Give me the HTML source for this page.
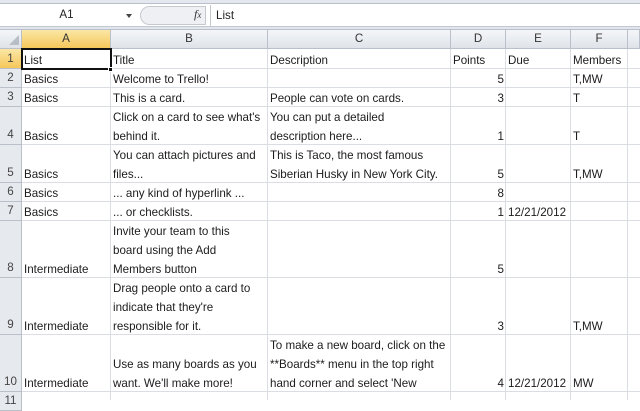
<!DOCTYPE html>
<html><head><style>
body{margin:0;width:640px;height:400px;overflow:hidden;background:#fff;font-family:"Liberation Sans",sans-serif;position:relative;font-size:11.6px;color:#1c1c1c}
div{position:absolute;box-sizing:border-box}
.top{left:0;top:0;width:640px;height:4px;background:#e4e8ee;border-bottom:1px solid #b8c0ca}
.sep{left:0;top:26px;width:640px;height:4px;background:#e2e6ec;border-top:1px solid #c2c8d0;border-bottom:1px solid #b8c0ca}
.v{top:49px;height:351px;width:1px;background:#dadde2}
.hl{left:22px;width:618px;height:1px;background:#dadde2}
.hd{top:30px;height:19px;background:linear-gradient(#f4f6f9,#dfe3e9);border-right:1px solid #b9c0c9;border-bottom:1px solid #b9c0c9;text-align:center;line-height:18px;color:#333}
.rh{left:0;width:22px;background:#e6e9ee;border-right:1px solid #b9c0c9;border-bottom:1px solid #b9c0c9;text-align:center;color:#444;line-height:19px;display:flex;align-items:flex-end;justify-content:center;padding-bottom:0}
.t{line-height:19px;white-space:nowrap;margin-top:2px}
.n{text-align:right}
</style></head><body>
<div class="top"></div>
<div style="left:0;top:5px;width:133px;height:20px;text-align:center;line-height:20px;color:#222">A1</div>
<div style="left:126px;top:14px;width:0;height:0;border-left:3px solid transparent;border-right:3px solid transparent;border-top:4px solid #444"></div>
<div style="left:140px;top:6px;width:66px;height:19px;border:1px solid #c4c9d0;border-radius:10px 0 0 10px;background:#eef0f3"></div>
<div style="left:194px;top:7px;font-style:italic;font-family:'Liberation Serif',serif;font-size:12px;color:#333">f<span style="font-size:9px">x</span></div>
<div style="left:210px;top:5px;width:1px;height:21px;background:#c4c9d0"></div>
<div style="left:216px;top:5px;line-height:21px;color:#222">List</div>
<div class="sep"></div>

<div class="hd" style="left:0;width:22px;padding:0"><svg width="10" height="10" style="position:absolute;left:9px;top:5px"><path d="M10 0V10H0Z" fill="#b8bec6"/></svg></div>
<div class="hd" style="left:22px;width:89px;background:linear-gradient(#fbe7a6,#f5c75a)">A</div>
<div class="hd" style="left:111px;width:157px">B</div>
<div class="hd" style="left:268px;width:183px">C</div>
<div class="hd" style="left:451px;width:55px">D</div>
<div class="hd" style="left:506px;width:65px">E</div>
<div class="hd" style="left:571px;width:57px">F</div>
<div class="hd" style="left:628px;width:12px"></div>

<div class="v" style="left:110px"></div><div class="v" style="left:267px"></div><div class="v" style="left:450px"></div>
<div class="v" style="left:505px"></div><div class="v" style="left:570px"></div><div class="v" style="left:627px"></div>
<div class="hl" style="top:68px"></div><div class="hl" style="top:87px"></div><div class="hl" style="top:106px"></div>
<div class="hl" style="top:144px"></div><div class="hl" style="top:182px"></div><div class="hl" style="top:201px"></div>
<div class="hl" style="top:220px"></div><div class="hl" style="top:277px"></div><div class="hl" style="top:334px"></div>
<div class="hl" style="top:391px"></div>

<div class="rh" style="top:49px;height:20px;background:linear-gradient(#fbe7a6,#f5c75a)">1</div>
<div class="rh" style="top:69px;height:19px">2</div>
<div class="rh" style="top:88px;height:19px">3</div>
<div class="rh" style="top:107px;height:38px">4</div>
<div class="rh" style="top:145px;height:38px">5</div>
<div class="rh" style="top:183px;height:19px">6</div>
<div class="rh" style="top:202px;height:19px">7</div>
<div class="rh" style="top:221px;height:57px">8</div>
<div class="rh" style="top:278px;height:57px">9</div>
<div class="rh" style="top:335px;height:57px">10</div>
<div class="rh" style="top:392px;height:19px">11</div>

<div style="left:21px;top:48px;width:91px;height:22px;border:2px solid #111"></div>
<div style="left:108px;top:67px;width:5px;height:5px;background:#111;border:1px solid #fff"></div>

<div class="t" style="left:24px;top:49px">List</div>
<div class="t" style="left:113px;top:49px">Title</div>
<div class="t" style="left:270px;top:49px">Description</div>
<div class="t" style="left:453px;top:49px">Points</div>
<div class="t" style="left:508px;top:49px">Due</div>
<div class="t" style="left:573px;top:49px">Members</div>

<div class="t" style="left:24px;top:68px">Basics</div>
<div class="t" style="left:113px;top:68px">Welcome to Trello!</div>
<div class="t n" style="left:451px;width:53px;top:68px">5</div>
<div class="t" style="left:573px;top:68px">T,MW</div>

<div class="t" style="left:24px;top:87px">Basics</div>
<div class="t" style="left:113px;top:87px">This is a card.</div>
<div class="t" style="left:270px;top:87px">People can vote on cards.</div>
<div class="t n" style="left:451px;width:53px;top:87px">3</div>
<div class="t" style="left:573px;top:87px">T</div>

<div class="t" style="left:24px;top:125px">Basics</div>
<div class="t" style="left:113px;top:106px">Click on a card to see what's<br>behind it.</div>
<div class="t" style="left:270px;top:106px">You can put a detailed<br>description here...</div>
<div class="t n" style="left:451px;width:53px;top:125px">1</div>
<div class="t" style="left:573px;top:125px">T</div>

<div class="t" style="left:24px;top:163px">Basics</div>
<div class="t" style="left:113px;top:144px">You can attach pictures and<br>files...</div>
<div class="t" style="left:270px;top:144px">This is Taco, the most famous<br>Siberian Husky in New York City.</div>
<div class="t n" style="left:451px;width:53px;top:163px">5</div>
<div class="t" style="left:573px;top:163px">T,MW</div>

<div class="t" style="left:24px;top:182px">Basics</div>
<div class="t" style="left:113px;top:182px">... any kind of hyperlink ...</div>
<div class="t n" style="left:451px;width:53px;top:182px">8</div>

<div class="t" style="left:24px;top:201px">Basics</div>
<div class="t" style="left:113px;top:201px">... or checklists.</div>
<div class="t n" style="left:451px;width:53px;top:201px">1</div>
<div class="t" style="left:508px;top:201px">12/21/2012</div>

<div class="t" style="left:24px;top:258px">Intermediate</div>
<div class="t" style="left:113px;top:220px">Invite your team to this<br>board using the Add<br>Members button</div>
<div class="t n" style="left:451px;width:53px;top:258px">5</div>

<div class="t" style="left:24px;top:315px">Intermediate</div>
<div class="t" style="left:113px;top:277px">Drag people onto a card to<br>indicate that they're<br>responsible for it.</div>
<div class="t n" style="left:451px;width:53px;top:315px">3</div>
<div class="t" style="left:573px;top:315px">T,MW</div>

<div class="t" style="left:24px;top:372px">Intermediate</div>
<div class="t" style="left:113px;top:353px">Use as many boards as you<br>want. We'll make more!</div>
<div class="t" style="left:270px;top:334px">To make a new board, click on the<br>**Boards** menu in the top right<br>hand corner and select 'New</div>
<div class="t n" style="left:451px;width:53px;top:372px">4</div>
<div class="t" style="left:508px;top:372px">12/21/2012</div>
<div class="t" style="left:573px;top:372px">MW</div>
</body></html>
